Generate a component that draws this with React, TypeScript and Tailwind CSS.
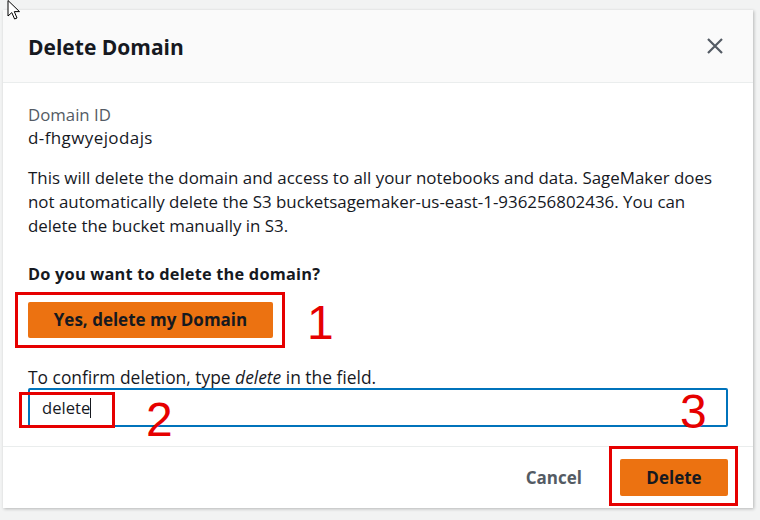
import React from 'react';

const font = { fontFamily: '"Open Sans", "Noto Sans", Arial, sans-serif' };
const redFont = { fontFamily: '"Liberation Sans", Arial, sans-serif' };

function CloseIcon() {
    return (
        <svg width="18" height="18" viewBox="0 0 18 18" fill="none">
            <path d="M2 2L16 16M16 2L2 16" stroke="#545b64" strokeWidth="2.2" />
        </svg>
    );
}

function Cursor() {
    return (
        <svg width="14" height="20" viewBox="0 0 14 20" className="absolute left-[7px] top-0">
            <path d="M1 0.5V16L4.8 12.6L7.6 19L10 18L7.3 11.6H12.5Z" fill="#fff" stroke="#000" strokeWidth="1" />
        </svg>
    );
}

export default function App() {
    return (
        <div className="relative w-[760px] h-[520px] overflow-hidden bg-[#f2f3f3] pt-[10px] pl-[3px]" style={font}>
            <div className="w-[750px] h-[498px] bg-white flex flex-col shadow-[1px_1px_3px_rgba(0,0,0,0.25)]">
                {/* header */}
                <div className="h-[73px] shrink-0 bg-[#fafafa] border-b border-[#eaeded] flex items-center justify-between pl-[25px] pr-[29px]">
                    <h1 className="text-[21px] font-bold text-[#16191f] leading-[26px] pt-[1px]">Delete Domain</h1>
                    <CloseIcon />
                </div>

                {/* body */}
                <div className="flex-1 flex flex-col pl-[25px] pr-[25px] pt-[21px] text-[16.35px] text-[#16191f]">
                    <div className="leading-[22px] text-[16.8px] text-[#545b64]">Domain ID</div>
                    <div className="leading-[22px] mt-[1px] text-[17px] tracking-[0.4px]">d-fhgwyejodajs</div>
                    <p className="leading-[24px] mt-[17px] pr-[2px] text-[16.9px]">
                        This will delete the domain and access to all your notebooks and data. SageMaker does not automatically delete the S3 bucketsagemaker-us-east-1-936256802436. You can delete the bucket manually in S3.
                    </p>
                    <div className="font-bold leading-[22px] mt-[25px] tracking-[0.2px]">Do you want to delete the domain?</div>
                    <div className="mt-[17px]">
                        <button className="h-[36px] w-[245px] rounded-[2px] bg-[#ec7211] font-bold text-[17px] text-[#16191f]">
                            Yes, delete my Domain
                        </button>
                    </div>
                    <div className="leading-[22px] mt-[28px] text-[17.4px]">
                        To confirm deletion, type <i>delete</i> in the field.
                    </div>
                    <div className="h-[39px] w-[700px] border-2 border-[#0073bb] rounded-[2px] flex items-center pl-[12px]">
                        <span className="leading-[22px] text-[16.6px]">delete</span>
                        <span className="w-[1px] h-[20px] bg-[#16191f]" />
                    </div>
                </div>

                {/* footer */}
                <div className="h-[62px] shrink-0 border-t border-[#eaeded] flex items-center justify-end gap-[38px] pr-[25px]">
                    <span className="font-bold text-[17px] text-[#545b64]">Cancel</span>
                    <button className="h-[37px] w-[108px] rounded-[2px] bg-[#ec7211] font-bold text-[17px] text-[#16191f]">
                        Delete
                    </button>
                </div>
            </div>

            <Cursor />

            {/* annotations */}
            <div className="absolute left-[15px] top-[292px] w-[270px] h-[56px] border-[3px] border-[#e60000]" />
            <div className="absolute left-[19px] top-[392px] w-[96px] h-[36px] border-[3px] border-[#e60000]" />
            <div className="absolute left-[609px] top-[446px] w-[129px] h-[60px] border-[3px] border-[#e60000]" />

            <span className="absolute left-[307px] top-[299px] text-[48px] leading-[48px] text-[#e60000]" style={redFont}>1</span>
            <span className="absolute left-[146px] top-[396px] text-[48px] leading-[48px] text-[#e60000]" style={redFont}>2</span>
            <span className="absolute left-[680px] top-[388px] text-[48px] leading-[48px] text-[#e60000]" style={redFont}>3</span>
        </div>
    );
}
